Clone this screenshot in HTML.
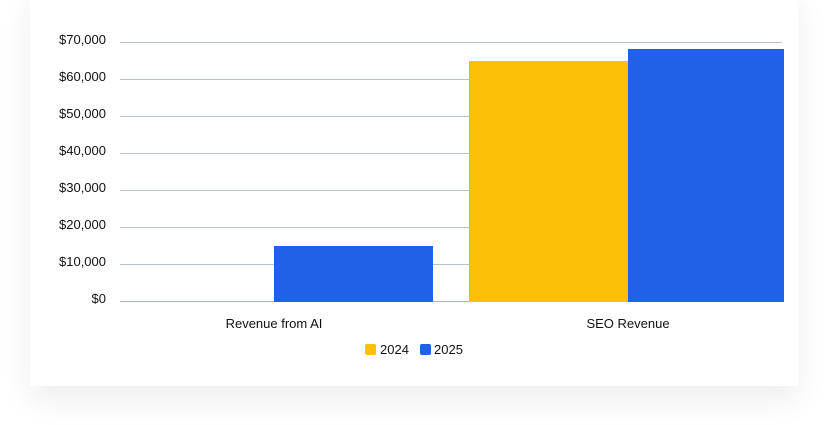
<!DOCTYPE html>
<html><head><style>
body{margin:0;width:827px;height:425px;background:#fff;position:relative;overflow:hidden;font-family:"Liberation Sans",sans-serif;}
.card{position:absolute;left:30px;top:-10px;width:768px;height:396px;background:#fff;box-shadow:0 14px 30px rgba(0,0,0,0.07);}
.g{position:absolute;left:120px;width:662px;height:1px;background:#b9c2c8;}
.yl{position:absolute;right:721px;font-size:13px;color:#111;line-height:14px;}
.bar{position:absolute;}
.xl{position:absolute;font-size:13px;color:#111;top:316px;transform:translateX(-50%);white-space:nowrap;}
.sq{position:absolute;width:11px;height:11px;border-radius:2px;top:344px;}
.lt{position:absolute;top:342px;font-size:13px;color:#111;}
</style></head><body>
<div class="card"></div>
<div class="g" style="top:42px"></div><div class="g" style="top:79px"></div><div class="g" style="top:116px"></div><div class="g" style="top:153px"></div><div class="g" style="top:190px"></div><div class="g" style="top:227px"></div><div class="g" style="top:264px"></div><div class="g" style="top:301px;background:#aab4bd"></div>
<div class="yl" style="top:33px">$70,000</div>
<div class="yl" style="top:70px">$60,000</div>
<div class="yl" style="top:107px">$50,000</div>
<div class="yl" style="top:144px">$40,000</div>
<div class="yl" style="top:181px">$30,000</div>
<div class="yl" style="top:218px">$20,000</div>
<div class="yl" style="top:255px">$10,000</div>
<div class="yl" style="top:292px">$0</div>
<div class="bar" style="left:274px;top:246px;width:159px;height:56px;background:#2160e9"></div>
<div class="bar" style="left:469px;top:61px;width:159px;height:241px;background:#fdbf07"></div>
<div class="bar" style="left:628px;top:49px;width:156px;height:253px;background:#2160e9"></div>
<div class="xl" style="left:274px">Revenue from AI</div>
<div class="xl" style="left:628px">SEO Revenue</div>
<div class="sq" style="left:365px;background:#fdbf07"></div><div class="lt" style="left:380px">2024</div>
<div class="sq" style="left:420px;background:#2160e9"></div><div class="lt" style="left:434px">2025</div>
</body></html>
